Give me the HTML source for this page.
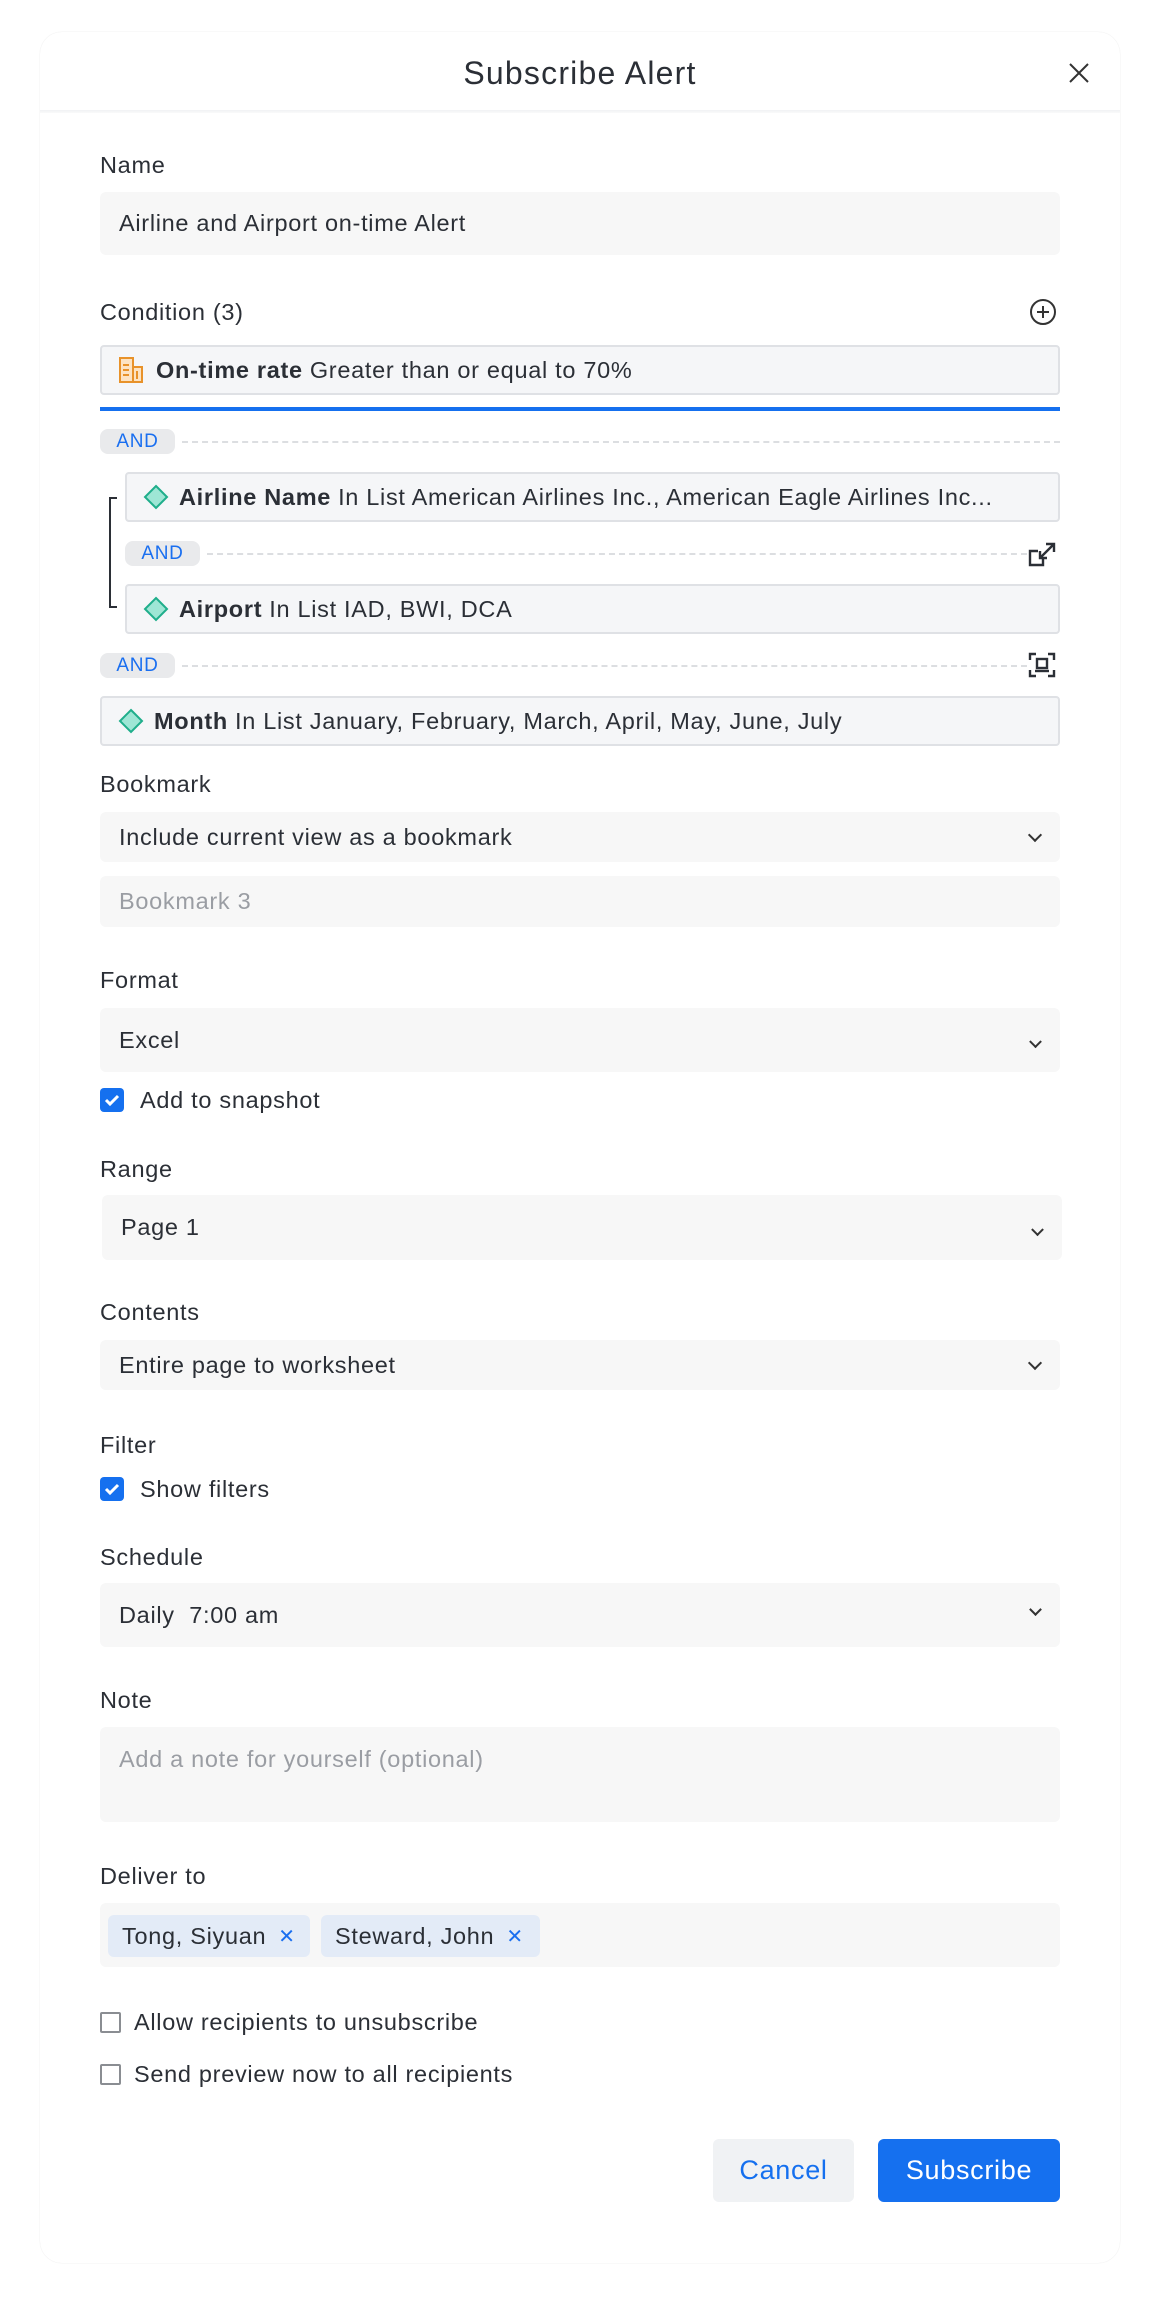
<!DOCTYPE html>
<html><head><meta charset="utf-8">
<style>
*{box-sizing:border-box;margin:0;padding:0}
body{width:1160px;height:2312px;background:#fff;font-family:"Liberation Sans",sans-serif;color:#2b2f36;position:relative;overflow:hidden;letter-spacing:0.7px}
.a{position:absolute}
.dlg{left:40px;top:32px;width:1080px;height:2231px;border-radius:22px;background:#fff;box-shadow:0 0 1px rgba(0,0,0,.15)}
.hdr{left:40px;top:110px;width:1080px;height:3px;background:linear-gradient(#f1f2f4,#fafafa)}
.title{left:0;width:1160px;top:55px;text-align:center;font-size:32px;color:#2b2f36;letter-spacing:1.2px}
.lbl{left:100px;font-size:23.5px;color:#2b2f36;line-height:26px}
.inp{left:100px;width:960px;background:#f7f7f7;border-radius:6px;font-size:23.5px;padding-left:19px;display:flex;align-items:center;color:#2b2f36}
.ph{color:#9a9da3}
.cond{background:#f5f6f8;border:2px solid #dfe1e5;border-radius:4px;font-size:23.5px;display:flex;align-items:center;padding-left:16px;white-space:nowrap;overflow:hidden}
.cond b{font-weight:bold;margin-right:7px}
.and{background:#e9eaec;color:#1a6ff0;font-size:19px;border-radius:8px;width:75px;height:25px;display:flex;align-items:center;justify-content:center}
.dash{height:0;border-top:2px dashed #dcdee1}
.chev{position:absolute;right:20px;top:50%;width:10px;height:10px;border-right:2px solid #333;border-bottom:2px solid #333;transform:translateY(-70%) rotate(45deg)}
.cb{width:24px;height:24px;background:#1570ef;border-radius:4px}
.cbe{width:21px;height:21px;border:2px solid #8a8d92;border-radius:2px;background:#fff}
.chip{background:#e3ebf7;border-radius:6px;height:42px;top:1915px;font-size:23.5px;display:flex;align-items:center;padding-left:14px}
.chip span{color:#1a6ff0;margin-left:12px;font-size:20px}
.diam{width:26px;height:26px;margin-right:10px;flex:none}
</style></head><body>
<div class="a dlg"></div>
<div class="a title">Subscribe Alert</div>
<svg class="a" style="left:1068px;top:62px" width="22" height="22" viewBox="0 0 22 22"><path d="M2 2L20 20M20 2L2 20" stroke="#333" stroke-width="2"/></svg>
<div class="a hdr"></div>

<div class="a lbl" style="top:152px">Name</div>
<div class="a inp" style="top:192px;height:63px">Airline and Airport on-time Alert</div>

<div class="a lbl" style="top:299px">Condition (3)</div>
<svg class="a" style="left:1029px;top:298px" width="28" height="28" viewBox="0 0 28 28"><circle cx="14" cy="14" r="12" fill="none" stroke="#333" stroke-width="2"/><path d="M14 8v12M8 14h12" stroke="#333" stroke-width="2"/></svg>

<div class="a cond" style="left:100px;top:345px;width:960px;height:50px">
<svg width="26" height="26" viewBox="0 0 26 26" style="margin-right:12px"><rect x="2" y="1" width="13" height="24" fill="#fde3c2" stroke="#e8922a" stroke-width="2"/><rect x="15" y="10" width="9" height="15" fill="#fde3c2" stroke="#e8922a" stroke-width="2"/><path d="M5 8h6M5 13h6M5 18h6M19 14v8" stroke="#e8922a" stroke-width="2"/></svg>
<b>On-time rate</b>Greater than or equal to 70%</div>
<div class="a" style="left:100px;top:407px;width:960px;height:4px;background:#1570ef"></div>

<div class="a and" style="left:100px;top:429px">AND</div>
<div class="a dash" style="left:182px;top:441px;width:878px"></div>

<div class="a" style="left:109px;top:497px;width:8px;height:111px;border:2px solid #2b2f36;border-right:none"></div>

<div class="a cond" style="left:125px;top:472px;width:935px;height:50px">
<svg class="diam" viewBox="0 0 26 26"><path d="M13 2L24 13L13 24L2 13Z" fill="#9ee6d5" stroke="#1fae8b" stroke-width="2"/></svg>
<b>Airline Name</b>In List American Airlines Inc., American Eagle Airlines Inc...</div>

<div class="a and" style="left:125px;top:541px">AND</div>
<div class="a dash" style="left:207px;top:553px;width:820px"></div>
<svg class="a" style="left:1028px;top:542px" width="28" height="26" viewBox="0 0 28 26"><path d="M10 9H2v14h13v-8" fill="none" stroke="#2b2f36" stroke-width="2.4"/><path d="M18 2h8v8M26 2L12 16M12 9v7h7" fill="none" stroke="#2b2f36" stroke-width="2.4"/></svg>

<div class="a cond" style="left:125px;top:584px;width:935px;height:50px">
<svg class="diam" viewBox="0 0 26 26"><path d="M13 2L24 13L13 24L2 13Z" fill="#9ee6d5" stroke="#1fae8b" stroke-width="2"/></svg>
<b>Airport</b>In List IAD, BWI, DCA</div>

<div class="a and" style="left:100px;top:653px">AND</div>
<div class="a dash" style="left:182px;top:665px;width:845px"></div>
<svg class="a" style="left:1028px;top:652px" width="28" height="26" viewBox="0 0 28 26"><path d="M2 8V2h6M20 2h6v6M26 18v6h-6M8 24H2v-6" fill="none" stroke="#2b2f36" stroke-width="2.4"/><rect x="9" y="7" width="10" height="9" fill="none" stroke="#2b2f36" stroke-width="2.4"/><path d="M7 19h14" stroke="#2b2f36" stroke-width="2.4"/></svg>

<div class="a cond" style="left:100px;top:696px;width:960px;height:50px">
<svg class="diam" viewBox="0 0 26 26"><path d="M13 2L24 13L13 24L2 13Z" fill="#9ee6d5" stroke="#1fae8b" stroke-width="2"/></svg>
<b>Month</b>In List January, February, March, April, May, June, July</div>

<div class="a lbl" style="top:771px">Bookmark</div>
<div class="a inp" style="top:812px;height:50px">Include current view as a bookmark<i class="chev"></i></div>
<div class="a inp ph" style="top:876px;height:51px">Bookmark 3</div>

<div class="a lbl" style="top:967px">Format</div>
<div class="a inp" style="top:1008px;height:64px">Excel<i class="chev" style="transform:translateY(-30%) rotate(45deg);width:9px;height:9px"></i></div>
<div class="a cb" style="left:100px;top:1088px"><svg width="24" height="24" viewBox="0 0 24 24"><path d="M6 12l4 4 8-8" fill="none" stroke="#fff" stroke-width="3"/></svg></div>
<div class="a lbl" style="left:140px;top:1087px">Add to snapshot</div>

<div class="a lbl" style="top:1156px">Range</div>
<div class="a inp" style="left:102px;top:1195px;height:65px">Page 1<i class="chev" style="transform:translateY(-30%) rotate(45deg);width:9px;height:9px"></i></div>

<div class="a lbl" style="top:1299px">Contents</div>
<div class="a inp" style="top:1340px;height:50px">Entire page to worksheet<i class="chev"></i></div>

<div class="a lbl" style="top:1432px">Filter</div>
<div class="a cb" style="left:100px;top:1477px"><svg width="24" height="24" viewBox="0 0 24 24"><path d="M6 12l4 4 8-8" fill="none" stroke="#fff" stroke-width="3"/></svg></div>
<div class="a lbl" style="left:140px;top:1476px">Show filters</div>

<div class="a lbl" style="top:1544px">Schedule</div>
<div class="a inp" style="top:1583px;height:64px;white-space:pre">Daily  7:00 am<i class="chev" style="transform:translateY(-110%) rotate(45deg);width:9px;height:9px"></i></div>

<div class="a lbl" style="top:1687px">Note</div>
<div class="a inp ph" style="top:1727px;height:95px;align-items:flex-start;padding-top:19px">Add a note for yourself (optional)</div>

<div class="a lbl" style="top:1863px">Deliver to</div>
<div class="a inp" style="top:1903px;height:64px"></div>
<div class="a chip" style="left:108px;width:202px">Tong, Siyuan<span>✕</span></div>
<div class="a chip" style="left:321px;width:219px">Steward, John<span>✕</span></div>

<div class="a cbe" style="left:100px;top:2012px"></div>
<div class="a lbl" style="left:134px;top:2009px">Allow recipients to unsubscribe</div>
<div class="a cbe" style="left:100px;top:2064px"></div>
<div class="a lbl" style="left:134px;top:2061px">Send preview now to all recipients</div>

<div class="a" style="left:713px;top:2139px;width:141px;height:63px;background:#f0f2f4;border-radius:6px;color:#1570ef;font-size:27px;display:flex;align-items:center;justify-content:center">Cancel</div>
<div class="a" style="left:878px;top:2139px;width:182px;height:63px;background:#1570ef;border-radius:6px;color:#fff;font-size:27px;display:flex;align-items:center;justify-content:center">Subscribe</div>
</body></html>
